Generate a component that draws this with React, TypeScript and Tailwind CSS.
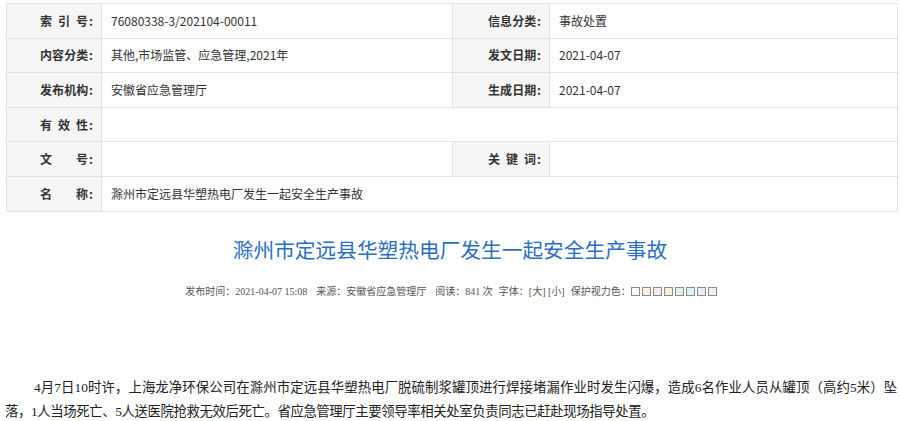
import React from 'react';

const sans = '"Noto Sans CJK SC", "Liberation Sans", sans-serif';
const serif = '"Liberation Serif", "Noto Sans CJK SC", serif';

const Label: React.FC<{ chars: string[] }> = ({ chars }) => (
  <span className="inline-flex items-center">
    <span className="inline-flex w-[48px] justify-between">
      {chars.map((c, i) => (
        <span key={i}>{c}</span>
      ))}
    </span>
    <span className="ml-[1px]">:</span>
  </span>
);

const labelCls =
  'bg-[#f6f6f6] border border-[#e4e4e4] text-right pr-[8px] font-bold text-[12px] text-[#333] h-[34.6px]';
const valueCls = 'bg-white border border-[#e4e4e4] pl-[9px] text-[12px] text-[#333] h-[34.6px]';

const swatches = ['#ffffff', '#faf0e4', '#f7e9ea', '#f3f1dc', '#e6f3e2', '#dcf3ee', '#e6edf7', '#f1f1f1'];

export default function App() {
  return (
    <div className="w-[900px] h-[421px] overflow-hidden bg-white" style={{ fontFamily: sans }}>
      <div className="pt-[3px] pl-[6px] pr-[3px]">
        <table className="border-collapse w-[891px] table-fixed">
          <colgroup>
            <col className="w-[95px]" />
            <col className="w-[351px]" />
            <col className="w-[97px]" />
            <col className="w-[348px]" />
          </colgroup>
          <tbody>
            <tr>
              <td className={labelCls}><Label chars={['索', '引', '号']} /></td>
              <td className={valueCls}>76080338-3/202104-00011</td>
              <td className={labelCls}><Label chars={['信', '息', '分', '类']} /></td>
              <td className={valueCls}>事故处置</td>
            </tr>
            <tr>
              <td className={labelCls}><Label chars={['内', '容', '分', '类']} /></td>
              <td className={valueCls}>其他,市场监管、应急管理,2021年</td>
              <td className={labelCls}><Label chars={['发', '文', '日', '期']} /></td>
              <td className={valueCls}>2021-04-07</td>
            </tr>
            <tr>
              <td className={labelCls}><Label chars={['发', '布', '机', '构']} /></td>
              <td className={valueCls}>安徽省应急管理厅</td>
              <td className={labelCls}><Label chars={['生', '成', '日', '期']} /></td>
              <td className={valueCls}>2021-04-07</td>
            </tr>
            <tr>
              <td className={labelCls}><Label chars={['有', '效', '性']} /></td>
              <td className={valueCls} colSpan={3}></td>
            </tr>
            <tr>
              <td className={labelCls}><Label chars={['文', '号']} /></td>
              <td className={valueCls}></td>
              <td className={labelCls}><Label chars={['关', '键', '词']} /></td>
              <td className={valueCls}></td>
            </tr>
            <tr>
              <td className={labelCls}><Label chars={['名', '称']} /></td>
              <td className={valueCls} colSpan={3}>滁州市定远县华塑热电厂发生一起安全生产事故</td>
            </tr>
          </tbody>
        </table>
      </div>

      <h1 className="mt-[22px] text-center text-[20.7px] leading-[30px] text-[#2a6fc2]">
        滁州市定远县华塑热电厂发生一起安全生产事故
      </h1>

      <div
        className="mt-[20px] flex items-center justify-center text-[10px] leading-[16px] text-[#555] pl-[2px]"
        style={{ fontFamily: serif }}
      >
        <span>发布时间：2021-04-07 15:08</span>
        <span className="ml-[9px]">来源：安徽省应急管理厅</span>
        <span className="ml-[9px]">阅读：841 次</span>
        <span className="ml-[6px]">字体：[大] [小]</span>
        <span className="ml-[6px]">保护视力色：</span>
        <span className="flex gap-[2px]">
          {swatches.map((c) => (
            <span key={c} className="w-[9px] h-[9px] border border-[#8a8a8a]" style={{ backgroundColor: c }} />
          ))}
        </span>
      </div>

      <div
        className="mt-[76px] pl-[5px] pr-[3px] text-[13.4px] leading-[24px] text-[#222]"
        style={{ fontFamily: serif }}
      >
        <p className="indent-[29px] text-justify [text-align-last:justify] whitespace-nowrap tracking-[-0.1px]">
          4月7日10时许，上海龙净环保公司在滁州市定远县华塑热电厂脱硫制浆罐顶进行焊接堵漏作业时发生闪爆，造成6名作业人员从罐顶（高约5米）坠
        </p>
        <p className="tracking-[-0.4px]">
          落，1人当场死亡、5人送医院抢救无效后死亡。省应急管理厅主要领导率相关处室负责同志已赶赴现场指导处置。
        </p>
      </div>
    </div>
  );
}
